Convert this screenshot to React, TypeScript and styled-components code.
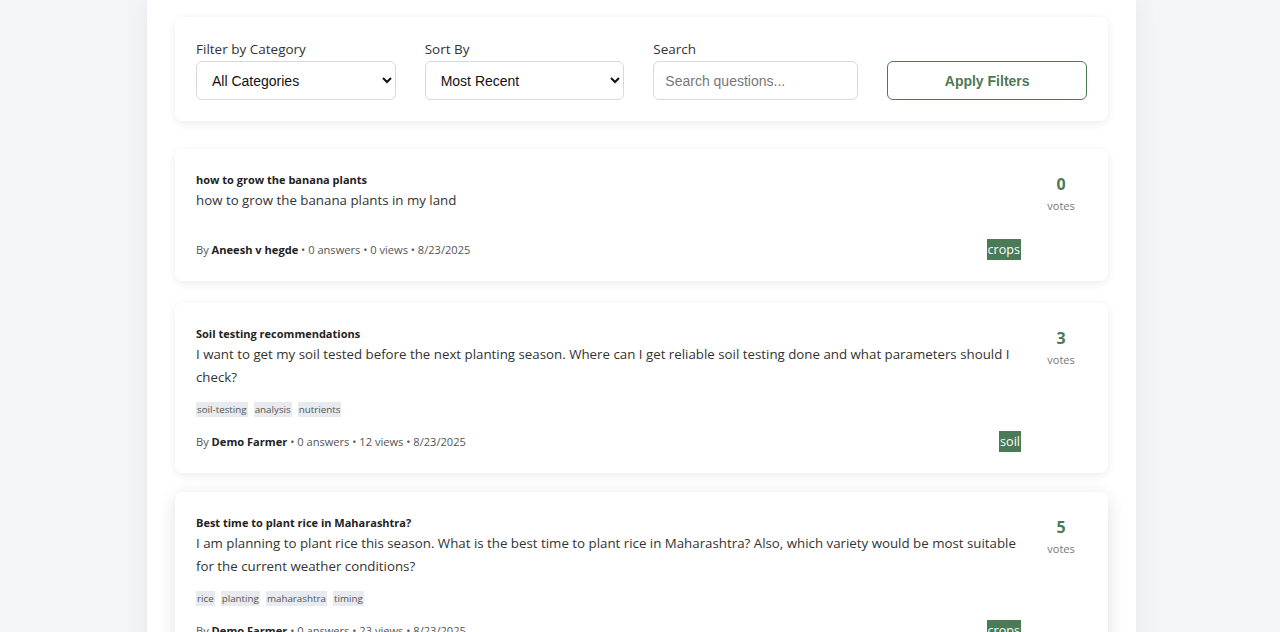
import React from "react"
import styled, { createGlobalStyle } from "styled-components"

const GlobalStyle = createGlobalStyle`
  body {
    margin: 0;
    background: #f3f5f8;
    font-family: "Open Sans", "Noto Sans", sans-serif;
    color: #333;
  }
`

const green = "#4a7a56"

type Question = {
  title: string
  body: string
  tags: string[]
  author: string
  answers: number
  views: number
  date: string
  category: string
  votes: number
}

const questions: Question[] = [
  {
    title: "how to grow the banana plants",
    body: "how to grow the banana plants in my land",
    tags: [],
    author: "Aneesh v hegde",
    answers: 0,
    views: 0,
    date: "8/23/2025",
    category: "crops",
    votes: 0,
  },
  {
    title: "Soil testing recommendations",
    body:
      "I want to get my soil tested before the next planting season. Where can I get reliable soil testing done and what parameters should I check?",
    tags: ["soil-testing", "analysis", "nutrients"],
    author: "Demo Farmer",
    answers: 0,
    views: 12,
    date: "8/23/2025",
    category: "soil",
    votes: 3,
  },
  {
    title: "Best time to plant rice in Maharashtra?",
    body:
      "I am planning to plant rice this season. What is the best time to plant rice in Maharashtra? Also, which variety would be most suitable for the current weather conditions?",
    tags: ["rice", "planting", "maharashtra", "timing"],
    author: "Demo Farmer",
    answers: 0,
    views: 23,
    date: "8/23/2025",
    category: "crops",
    votes: 5,
  },
]

const Page = styled.div`
  min-height: 100vh;
`

const Container = styled.main`
  width: 989px;
  margin: 0 0 0 calc(50% - 493px);
  box-sizing: border-box;
  padding: 17px 28px 40px;
  background: #fff;
  box-shadow: 0 0 24px rgba(0, 0, 0, 0.06);
  min-height: 100vh;
`

const FilterCard = styled.section`
  background: #fff;
  border-radius: 8px;
  box-shadow: 0 2px 10px rgba(0, 0, 0, 0.08);
  padding: 23px 21px 21px;
  display: grid;
  grid-template-columns: repeat(4, 1fr);
  gap: 29px;
  align-items: end;
`

const Field = styled.label`
  display: flex;
  flex-direction: column;
  gap: 3px;
  font-size: 13.5px;
  color: #333;
`

const Select = styled.select`
  height: 39px;
  border: 1px solid #d6d9dd;
  border-radius: 6px;
  padding: 0 11px;
  font-family: "Liberation Sans", Arial, sans-serif;
  font-size: 14px;
  color: #111;
  background: #fff;
`

const SearchInput = styled.input`
  height: 39px;
  box-sizing: border-box;
  border: 1px solid #d6d9dd;
  border-radius: 6px;
  padding: 0 11px;
  font-family: "Liberation Sans", Arial, sans-serif;
  font-size: 14px;
  &::placeholder {
    color: #777;
  }
`

const ApplyButton = styled.button`
  height: 39px;
  border: 1.5px solid ${green};
  border-radius: 6px;
  background: #fff;
  color: ${green};
  font-family: "Liberation Sans", Arial, sans-serif;
  font-weight: bold;
  font-size: 14px;
  cursor: pointer;
`

const List = styled.div`
  margin-top: 28px;
  display: flex;
  flex-direction: column;
  gap: 22px;
`

const Card = styled.article<{ $hovered?: boolean }>`
  background: #fff;
  border-radius: 8px;
  box-shadow: ${p =>
    p.$hovered ? "0 4px 18px rgba(0, 0, 0, 0.12)" : "0 2px 10px rgba(0, 0, 0, 0.08)"};
  transform: ${p => (p.$hovered ? "translateY(-3px)" : "none")};
  padding: 22px 21px 21px;
  display: flex;
  gap: 20px;
`

const Content = styled.div`
  flex: 1;
  min-width: 0;
`

const Title = styled.h3`
  margin: 0;
  font-size: 11px;
  font-weight: 700;
  line-height: 17px;
  color: #222;
`

const Body = styled.p`
  margin: 0;
  padding-top: 1px;
  font-size: 13.3px;
  line-height: 23px;
  color: #333;
`

const Tags = styled.div`
  display: flex;
  gap: 6px;
  margin: 12.5px 0 14.5px;
`

const Tag = styled.span`
  background: #e7eaee;
  color: #555;
  font-size: 9.8px;
  line-height: 15px;
  padding: 0 1px;
`

const MetaRow = styled.div`
  display: flex;
  align-items: center;
  justify-content: space-between;
  height: 21px;
`

const Meta = styled.div`
  font-size: 11.1px;
  color: #555;
  b {
    color: #222;
  }
`

const Category = styled.span`
  background: ${green};
  color: #fff;
  font-size: 12.6px;
  line-height: 21px;
  padding: 0 1px;
`

const Votes = styled.div`
  width: 40px;
  padding: 2px 6px 0 0;
  display: flex;
  flex-direction: column;
  align-items: center;
`

const VoteCount = styled.span`
  font-size: 16px;
  font-weight: 700;
  color: ${green};
  line-height: 22px;
`

const VoteLabel = styled.span`
  font-size: 11px;
  color: #777;
  line-height: 22px;
`

export default function App() {
  return (
    <Page>
      <GlobalStyle />
      <Container>
        <FilterCard>
          <Field>
            Filter by Category
            <Select defaultValue="all">
              <option value="all">All Categories</option>
              <option value="crops">Crops</option>
              <option value="soil">Soil</option>
            </Select>
          </Field>
          <Field>
            Sort By
            <Select defaultValue="recent">
              <option value="recent">Most Recent</option>
              <option value="votes">Most Votes</option>
            </Select>
          </Field>
          <Field>
            Search
            <SearchInput placeholder="Search questions..." />
          </Field>
          <ApplyButton>Apply Filters</ApplyButton>
        </FilterCard>

        <List>
          {questions.map((q, i) => (
            <Card key={q.title} $hovered={i === 2}>
              <Content>
                <Title>{q.title}</Title>
                <Body>{q.body}</Body>
                <Tags>
                  {q.tags.map(t => (
                    <Tag key={t}>{t}</Tag>
                  ))}
                </Tags>
                <MetaRow>
                  <Meta>
                    By <b>{q.author}</b> • {q.answers} answers • {q.views} views • {q.date}
                  </Meta>
                  <Category>{q.category}</Category>
                </MetaRow>
              </Content>
              <Votes>
                <VoteCount>{q.votes}</VoteCount>
                <VoteLabel>votes</VoteLabel>
              </Votes>
            </Card>
          ))}
        </List>
      </Container>
    </Page>
  )
}
